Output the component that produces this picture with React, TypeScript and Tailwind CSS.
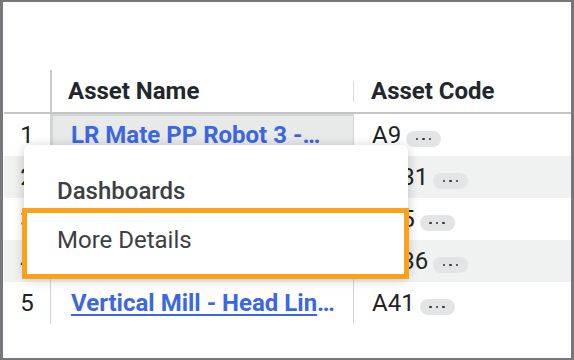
import React from 'react';

type Row = { n: number; name: string; code: string; selected?: boolean; underline?: boolean };

const rows: Row[] = [
  { n: 1, name: 'LR Mate PP Robot 3 - ', code: 'A9', selected: true },
  { n: 2, name: 'Arc Mate Welding Cell - ', code: 'A131' },
  { n: 3, name: 'Horizontal Lathe - Spin', code: 'A15' },
  { n: 4, name: 'Paint Booth Robot 2 - Ar', code: 'A136' },
  { n: 5, name: 'Vertical Mill - Head Lin', code: 'A41', underline: true },
];

function MorePill() {
  return (
    <span className="ml-[5px] mt-[8px] inline-flex h-[16px] w-[35px] shrink-0 items-center justify-center gap-[4px] rounded-full bg-[#e3e4e5]">
      <span className="h-[2.5px] w-[2.5px] rounded-full bg-[#333]" />
      <span className="h-[2.5px] w-[2.5px] rounded-full bg-[#333]" />
      <span className="h-[2.5px] w-[2.5px] rounded-full bg-[#333]" />
    </span>
  );
}

export default function App() {
  return (
    <div className="h-[360px] w-[574px] overflow-hidden border-x-[3px] border-y-2 border-[#77767b] bg-white pl-px font-['Roboto',sans-serif] text-[#222]">
      <div className="relative mt-[68px]">
        {/* header */}
        <div className="flex h-[44px] border-b-2 border-[#c3c5c7]">
          <div className="w-[48px] border-r-2 border-[#c8cacc]" />
          <div className="flex w-[301px] items-center pb-px pl-[16px] text-[24px] font-bold leading-[28px] text-[#22272b]">
            Asset Name
          </div>
          <div className="mt-[11px] h-[21px] w-px bg-[#d6d8da]" />
          <div className="flex flex-1 items-center pb-px pl-[17px] text-[24px] font-bold leading-[28px] text-[#22272b]">
            Asset Code
          </div>
        </div>

        {/* rows */}
        {rows.map((r) => (
          <div
            key={r.n}
            className={`flex h-[42px] ${r.n % 2 === 0 ? 'bg-[#f0f1f1]' : 'bg-white'}`}
          >
            <div className="flex w-[47px] items-center justify-center border-r border-[#d2d4d6] text-[24px] leading-[28px]">
              {r.n}
            </div>
            <div
              className={`flex w-[303px] items-center whitespace-nowrap border-r border-[#d2d4d6] text-[24px] font-bold leading-[28px] text-[#3b67e0] ${
                r.selected ? 'border-2 border-[#b4b6b8] bg-[#e8e9e9] pl-[18px]' : 'pl-[20px]'
              }`}
            >
              <span className={r.underline ? 'underline decoration-2 underline-offset-[3px]' : ''}>{r.name}</span>
              <span>…</span>
            </div>
            <div className="flex flex-1 items-center pl-[18px] text-[24px] leading-[28px]">
              {r.code}
              <MorePill />
            </div>
          </div>
        ))}

        {/* context menu */}
        <div className="absolute left-[20px] top-[75px] w-[384px] rounded-[6px] bg-white pt-[32px] shadow-[0_2px_12px_rgba(0,0,0,0.22)]">
          <div className="pl-[33px] text-[24px] font-medium leading-[28px] text-[#3c4043]">Dashboards</div>
          <div className="h-[72px] pl-[33px] pt-[21px] text-[24px] leading-[28px] text-[#3c4043]">More Details</div>
        </div>

        {/* highlight */}
        <div className="pointer-events-none absolute left-[18px] top-[138px] h-[71px] w-[387px] border-[5px] border-[#fba21a]" />
      </div>
    </div>
  );
}
